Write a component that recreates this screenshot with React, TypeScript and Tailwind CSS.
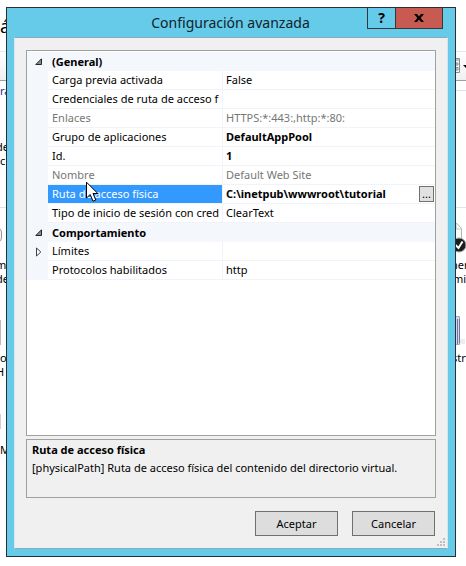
import { useState } from "react";
import type { ReactNode } from "react";

type Property = {
  label: string;
  value?: string;
  bold?: boolean;
  readOnly?: boolean;
  selected?: boolean;
  expandable?: boolean;
};

type Group = { name: string; properties: Property[] };

const groups: Group[] = [
  {
    name: "(General)",
    properties: [
      { label: "Carga previa activada", value: "False" },
      { label: "Credenciales de ruta de acceso f" },
      { label: "Enlaces", value: "HTTPS:*:443:,http:*:80:", readOnly: true },
      { label: "Grupo de aplicaciones", value: "DefaultAppPool", bold: true },
      { label: "Id.", value: "1", bold: true },
      { label: "Nombre", value: "Default Web Site", readOnly: true },
      {
        label: "Ruta de acceso física",
        value: "C:\\inetpub\\wwwroot\\tutorial",
        bold: true,
        selected: true,
      },
      { label: "Tipo de inicio de sesión con cred", value: "ClearText" },
    ],
  },
  {
    name: "Comportamiento",
    properties: [
      { label: "Límites", expandable: true },
      { label: "Protocolos habilitados", value: "http" },
    ],
  },
];

function OpenArrow() {
  return (
    <svg width="7" height="7" viewBox="0 0 7 7" aria-hidden="true">
      <path d="M6.5 .8V6.5H.8Z" fill="#8d8d8d" stroke="#262626" strokeWidth="1" />
    </svg>
  );
}

function ClosedArrow() {
  return (
    <svg width="7" height="10" viewBox="0 0 7 10" aria-hidden="true">
      <path d="M1.5 1V9L5.800 5Z" fill="#fff" stroke="#404040" strokeWidth="1" />
    </svg>
  );
}

function PropertyRow({ property }: { property: Property }) {
  const { label, value, bold, readOnly, selected, expandable } = property;
  const tone = readOnly ? "text-[#767676]" : "text-black";
  return (
    <tr className="h-[19px]">
      <td className="bg-[#f4f7fc] p-0">
        {expandable && (
          <button
            type="button"
            aria-label={`Expandir ${label}`}
            className="flex h-[18px] w-full items-center pl-2"
          >
            <ClosedArrow />
          </button>
        )}
      </td>
      <th
        scope="row"
        className={`overflow-hidden border-r border-b border-[#f0f4fa] p-0 pl-1 text-left font-normal whitespace-nowrap ${
          selected ? "bg-[#3399ff] bg-clip-padding text-white" : tone
        }`}
      >
        {label}
      </th>
      <td className={`border-b border-[#f0f4fa] p-0 pl-[3px] ${tone} ${bold ? "font-bold" : ""}`}>
        <div className="flex h-[18px] items-center justify-between whitespace-nowrap">
          <span>{value}</span>
          {selected && (
            <button
              type="button"
              aria-label="Examinar"
              className="mr-px flex h-4 w-[15px] items-center justify-center border border-[#707070] bg-[#e1e1e1] font-normal"
            >
              ...
            </button>
          )}
        </div>
      </td>
    </tr>
  );
}

function PropertyGroup({ group }: { group: Group }) {
  const [open, setOpen] = useState(true);
  return (
    <tbody>
      <tr className="h-[19px] bg-[#f4f7fc]">
        <td className="p-0">
          <button
            type="button"
            aria-label={`Contraer ${group.name}`}
            aria-expanded={open}
            onClick={() => setOpen(!open)}
            className="flex h-[18px] w-full items-center pl-2"
          >
            {open ? <OpenArrow /> : <ClosedArrow />}
          </button>
        </td>
        <th scope="rowgroup" colSpan={2} className="p-0 pl-1 text-left font-bold">
          {group.name}
        </th>
      </tr>
      {open && group.properties.map((p) => <PropertyRow key={p.label} property={p} />)}
    </tbody>
  );
}

/* One band of the explorer: what shows left and right of the dialog. */
function Band({ left, right, className }: { left?: ReactNode; right?: ReactNode; className: string }) {
  return (
    <div className={`flex shrink-0 justify-between ${className}`}>
      <div className="w-1.5 overflow-hidden">{left}</div>
      <div className="w-[14px] overflow-hidden">{right}</div>
    </div>
  );
}

/* The explorer window that stays visible around the dialog. */
function Backdrop() {
  return (
    <div
      aria-hidden="true"
      className="absolute inset-0 flex flex-col overflow-hidden bg-white leading-[14px] text-black"
    >
      <Band className="h-[51px] pt-4" left={<p className="text-[18px] leading-5">á</p>} />
      <Band
        className="h-[30px] border-t border-b border-t-[#e8e8e8] border-b-[#a0a0a0] bg-linear-to-b from-white to-[#f0f0f0] pt-[5px]"
        right={
          <svg width="14" height="18" viewBox="0 0 14 18">
            <path d="M0 1.500H7.500V15.500H0" fill="#f5f5f5" stroke="#8c8c94" />
            <path d="M0 3H7M4 6H6V8H4ZM4 10.500H6V13H4Z" fill="none" stroke="#8c8c94" />
            <path d="M11 8H17L14 11Z" fill="#000" />
          </svg>
        }
      />
      <Band
        className="h-[59px] pt-[3px]"
        left={<p className="text-[#1e3287]">ra</p>}
        right={<hr className="mt-1.5 border-[#d5e5f5]" />}
      />
      <Band
        className="h-[67px]"
        left={
          <>
            <p className="-ml-1">de</p>
            <p>c</p>
          </>
        }
      />
      <Band
        className="h-[51px] border-t border-[#dbe4f0] pt-3"
        left={<div className="mt-2 -ml-2 h-[14px] w-[10px] rounded-sm border border-[#999999] bg-[#f4f4f4]" />}
        right={
          <svg width="16" height="34" viewBox="0 0 16 34">
            <path d="M-2 3.500H5L9.500 8.500V24H-2" fill="#fafafa" stroke="#b5b5b5" />
            <path d="M4 4V9H9" fill="none" stroke="#c8c8c8" />
            <circle cx="7" cy="25" r="7" fill="#1c1c1c" stroke="#a5a5a5" />
            <path d="M3.500 25L6.500 28L10.500 21.500" fill="none" stroke="#fff" strokeWidth="2" />
          </svg>
        }
      />
      <Band
        className="h-[57px]"
        left={
          <>
            <p className="-ml-1">m</p>
            <p className="-ml-1">de</p>
          </>
        }
        right={
          <>
            <p className="-ml-px">ner</p>
            <p className="ml-px">mi</p>
          </>
        }
      />
      <Band
        className="h-9"
        left={<div className="mt-[5px] h-[25px] w-px bg-[#bbbbbb]" />}
        right={
          <svg width="14" height="32" viewBox="0 0 14 32">
            <path d="M8 24H13V29H8Z" fill="#ededed" />
            <path d="M0 1.500H7.500V29.500H0Z" fill="#d5d7e8" stroke="#a4a6bd" />
            <path d="M5.500 4V29M7.500 4V28" stroke="#7073a5" />
          </svg>
        }
      />
      <Band
        className="h-[63px]"
        left={
          <>
            <p>o</p>
            <p className="-ml-1">H</p>
          </>
        }
        right={<p>str</p>}
      />
      <Band
        className="flex-1"
        left={
          <>
            <div className="mb-[14px] h-[15px] w-px bg-[#d0d0d0]" />
            <p>M</p>
          </>
        }
      />
    </div>
  );
}

function TitleBar() {
  return (
    <header className="flex h-7 shrink-0 items-start pr-[5px]">
      <h1 className="flex-1 pt-[5px] pl-20 text-center text-[14px] leading-5 text-[#10232b]">
        Configuración avanzada
      </h1>
      <div className="flex h-[21px] border-x border-b border-[#35373b]">
        <button
          type="button"
          aria-label="Ayuda"
          className="flex w-[27px] items-center justify-center text-[14px] font-bold text-black"
        >
          ?
        </button>
        <button
          type="button"
          aria-label="Cerrar"
          className="flex w-[47px] items-center justify-center border-l border-[#35373b] bg-[#c75b52]"
        >
          <svg width="10" height="8" viewBox="0 0 10 8">
            <path d="M0 0H3L5 2.400L7 0H10L6.600 4L10 8H7L5 5.600L3 8H0L3.400 4Z" fill="#000" />
          </svg>
        </button>
      </div>
    </header>
  );
}

export default function App() {
  return (
    <div className="relative flex min-h-screen flex-col pt-[7px] pr-[10px] pb-[9px] pl-[6px] font-['Noto_Sans','Open_Sans',sans-serif] text-[11px] leading-[18px]">
      <Backdrop />

      <div
        role="dialog"
        aria-label="Configuración avanzada"
        className="relative flex flex-1 flex-col border border-[#2b2f33] bg-[#66cae9] px-[7px] pb-[7px]"
      >
        <TitleBar />

        <div className="relative mt-px flex flex-1 flex-col border border-[#86abbd] border-r-[#d6e6ed] border-l-[#d6e6ed] bg-[#f0f0f0] px-[11px] py-3">
          <div className="flex-1 overflow-hidden border border-[#a0a0a0] bg-white pt-px">
            <table className="w-full table-fixed border-separate border-spacing-0">
              <colgroup>
                <col className="w-[21px]" />
                <col className="w-[175px]" />
                <col />
              </colgroup>
              {groups.map((g) => (
                <PropertyGroup key={g.name} group={g} />
              ))}
            </table>
          </div>

          <section className="mt-[3px] h-[59px] border border-[#a0a0a0] px-[5px] pt-px">
            <h2 className="font-bold">Ruta de acceso física</h2>
            <p>[physicalPath] Ruta de acceso física del contenido del directorio virtual.</p>
          </section>

          <div className="mt-[13px] flex justify-end gap-[14px] pr-px">
            <button type="button" className="h-[25px] w-[83px] border border-[#707070] bg-[#dddddd]">
              Aceptar
            </button>
            <button type="button" className="h-[25px] w-[83px] border border-[#707070] bg-[#dddddd]">
              Cancelar
            </button>
          </div>

          <svg className="absolute right-0.5 bottom-0.5" width="8" height="8" viewBox="0 0 8 8" aria-hidden="true">
            <path
              d="M6 0h2v2h-2ZM3 3h2v2h-2ZM6 3h2v2h-2ZM0 6h2v2h-2ZM3 6h2v2h-2ZM6 6h2v2h-2Z"
              fill="#bfbfbf"
            />
          </svg>
        </div>
      </div>

      <svg className="absolute top-[181px] left-[86px]" width="13" height="22" viewBox="0 0 13 22" aria-hidden="true">
        <path
          d="M.5 1.200V17L4.200 13.500L7 20.200L9.800 19L7 12.500H11.800Z"
          fill="#fff"
          stroke="#000"
          strokeWidth="1"
        />
      </svg>
    </div>
  );
}
